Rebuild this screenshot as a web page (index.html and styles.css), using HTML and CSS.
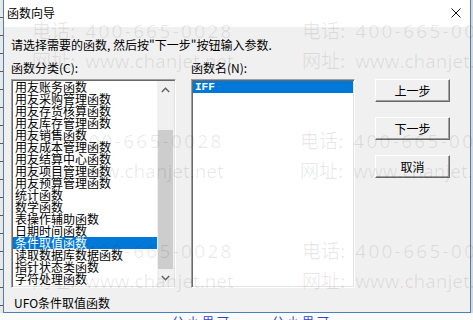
FILE: index.html
```html
<!DOCTYPE html>
<html lang="zh-CN">
<head>
    <meta charset="UTF-8">
    <title>函数向导</title>
    <link rel="stylesheet" href="styles.css">
</head>
<body>
    <div class="screen">
        <div class="desk">
            <div class="edge edge-left"></div>
            <div class="dialog">
                <div class="titlebar">
                    <span class="title">函数向导</span>
                    <span class="close-box">
                        <svg width="10" height="10" viewBox="0 0 10 10">
                            <path d="M0.5 0.5 L9.5 9.5 M9.5 0.5 L0.5 9.5" stroke="#111" stroke-width="1" fill="none"/>
                        </svg>
                    </span>
                </div>

                <div class="content">
                    <p class="hint">请选择需要的函数, 然后按"下一步"按钮输入参数.</p>

                    <div class="panes">
                        <div class="pane pane-cat">
                            <div class="pane-label">函数分类(C):</div>
                            <div class="listbox">
                                <div class="items">
                                    <div class="item">用友账务函数</div>
                                    <div class="item">用友采购管理函数</div>
                                    <div class="item">用友存货核算函数</div>
                                    <div class="item">用友库存管理函数</div>
                                    <div class="item">用友销售函数</div>
                                    <div class="item">用友成本管理函数</div>
                                    <div class="item">用友结算中心函数</div>
                                    <div class="item">用友项目管理函数</div>
                                    <div class="item">用友预算管理函数</div>
                                    <div class="item">统计函数</div>
                                    <div class="item">数学函数</div>
                                    <div class="item">表操作辅助函数</div>
                                    <div class="item">日期时间函数</div>
                                    <div class="item selected">条件取值函数</div>
                                    <div class="item">读取数据库数据函数</div>
                                    <div class="item">指针状态类函数</div>
                                    <div class="item">字符处理函数</div>
                                </div>
                                <div class="scrollbar">
                                    <div class="sb-arrow">
                                        <svg width="9" height="6" viewBox="0 0 9 6"><path d="M0.8 5 L4.5 1.3 L8.2 5" stroke="#606060" stroke-width="1.4" fill="none"/></svg>
                                    </div>
                                    <div class="sb-track"><div class="sb-thumb"></div></div>
                                    <div class="sb-arrow">
                                        <svg width="9" height="6" viewBox="0 0 9 6"><path d="M0.8 1 L4.5 4.7 L8.2 1" stroke="#606060" stroke-width="1.4" fill="none"/></svg>
                                    </div>
                                </div>
                            </div>
                        </div>

                        <div class="pane pane-fn">
                            <div class="pane-label">函数名(N):</div>
                            <div class="listbox">
                                <div class="items">
                                    <div class="item selected mono">IFF</div>
                                </div>
                            </div>
                        </div>

                        <div class="actions">
                            <button class="btn">上一步</button>
                            <button class="btn">下一步</button>
                            <button class="btn">取消</button>
                        </div>
                    </div>

                    <p class="status">UFO条件取值函数</p>
                </div>
            </div>
            <div class="edge edge-right"></div>
        </div>

        <div class="behind">
            <span class="behind-text t1">分小里可</span>
            <span class="behind-text t2">分小里可</span>
        </div>

        <!-- watermark of the screenshot source, lies over everything -->
        <div class="watermark">
            <div class="wm-tile" style="left: 32px; top: 15px;">
                <div class="wm-line"><span class="wm-key">电话:</span><span class="wm-val num">400-665-0028</span></div>
                <div class="wm-line"><span class="wm-key">网址:</span><span class="wm-val">www.chanjet.net</span></div>
            </div>
            <div class="wm-tile" style="left: 302px; top: 15px;">
                <div class="wm-line"><span class="wm-key">电话:</span><span class="wm-val num">400-665-0028</span></div>
                <div class="wm-line"><span class="wm-key">网址:</span><span class="wm-val">www.chanjet.net</span></div>
            </div>
            <div class="wm-tile" style="left: 22px; top: 125px;">
                <div class="wm-line"><span class="wm-key">电话:</span><span class="wm-val num">400-665-0028</span></div>
                <div class="wm-line"><span class="wm-key">网址:</span><span class="wm-val">www.chanjet.net</span></div>
            </div>
            <div class="wm-tile" style="left: 300px; top: 125px;">
                <div class="wm-line"><span class="wm-key">电话:</span><span class="wm-val num">400-665-0028</span></div>
                <div class="wm-line"><span class="wm-key">网址:</span><span class="wm-val">www.chanjet.net</span></div>
            </div>
            <div class="wm-tile" style="left: 32px; top: 235px;">
                <div class="wm-line"><span class="wm-key">电话:</span><span class="wm-val num">400-665-0028</span></div>
                <div class="wm-line"><span class="wm-key">网址:</span><span class="wm-val">www.chanjet.net</span></div>
            </div>
            <div class="wm-tile" style="left: 302px; top: 235px;">
                <div class="wm-line"><span class="wm-key">电话:</span><span class="wm-val num">400-665-0028</span></div>
                <div class="wm-line"><span class="wm-key">网址:</span><span class="wm-val">www.chanjet.net</span></div>
            </div>
        </div>
    </div>
</body>
</html>
```

FILE: styles.css
```css
:root {
    --face: #f0f0f0;
    --ui-font: "Noto Sans CJK SC", "Noto Sans", sans-serif;
    --select: #0078d7;
    --frame: #4b7fb8;
}

* {
    box-sizing: border-box;
}

body {
    margin: 0;
    width: 473px;
    height: 320px;
    overflow: hidden;
    font-family: var(--ui-font);
    font-size: 12px;
    color: #000;
    background-color: #e9e9e9;
}

.screen {
    position: relative;
    width: 473px;
    height: 320px;
    overflow: hidden;
}

.desk {
    display: flex;
    height: 313px;
}

/* bits of the main window behind the dialog */
.edge {
    background: repeating-linear-gradient(to bottom, #e8e8e8 0 17px, #5a5a5a 17px 18px);
}

.edge-left {
    width: 3px;
}

.edge-right {
    width: 2px;
    background: #d8d8d8;
}

.behind {
    position: relative;
    height: 7px;
    overflow: hidden;
    background-color: #fafbfd;
}

.behind-text {
    position: absolute;
    top: 3px;
    font-size: 12px;
    line-height: 12px;
    color: #3344c8;
    letter-spacing: 3px;
}

.behind-text.t1 {
    left: 172px;
}

.behind-text.t2 {
    left: 272px;
}

/* dialog */
.dialog {
    width: 468px;
    display: flex;
    flex-direction: column;
    background-color: var(--face);
    border: 1px solid var(--frame);
    border-top: none;
}

.titlebar {
    height: 27px;
    display: flex;
    align-items: center;
    justify-content: space-between;
    background-color: #fff;
    padding-left: 3px;
    padding-bottom: 1px;
}

.title {
    font-size: 12px;
    line-height: 14px;
}

.close-box {
    width: 28px;
    display: flex;
    justify-content: center;
}

.close-box svg {
    display: block;
}

.content {
    flex: 1;
    padding: 10px 0 1px 7px;
}

.hint {
    margin: 0;
    line-height: 16px;
}

.panes {
    display: flex;
    margin-top: 7px;
}

.pane-label {
    line-height: 16px;
    margin-bottom: 3px;
}

.pane-cat {
    width: 165px;
    margin-right: 15px;
}

.pane-fn {
    width: 164px;
    margin-right: 20px;
}

.listbox {
    display: flex;
    height: 209px;
    padding: 1px;
    background-color: #fff;
    border: 1px solid;
    border-color: #a0a0a0 #fff #fff #a0a0a0;
    box-shadow: inset 1px 1px #696969, inset -1px -1px #e3e3e3;
}

.items {
    flex: 1;
}

.item {
    height: 12px;
    line-height: 12px;
    padding-left: 2px;
    white-space: nowrap;
}

.item.selected {
    background-color: var(--select);
    color: #fff;
}

.item.mono {
    font-family: "Liberation Mono", monospace;
    font-weight: bold;
    font-size: 11px;
}

.scrollbar {
    width: 17px;
    display: flex;
    flex-direction: column;
    background-color: var(--face);
}

.sb-arrow {
    height: 17px;
    display: flex;
    align-items: center;
    justify-content: center;
}

.sb-arrow svg {
    display: block;
}

.sb-track {
    flex: 1;
    display: flex;
    flex-direction: column;
    padding: 32px 1px 0;
}

.sb-thumb {
    flex: 1;
    background-color: #cdcdcd;
}

.actions {
    display: flex;
    flex-direction: column;
    gap: 15px;
    padding-top: 19px;
}

.btn {
    width: 75px;
    height: 23px;
    padding: 0;
    font-family: var(--ui-font);
    font-size: 12px;
    color: #000;
    background-color: var(--face);
    border: 1px solid;
    border-color: #fff #696969 #696969 #fff;
    box-shadow: inset -1px -1px #a0a0a0;
}

.status {
    margin: 7px 0 0 3px;
    line-height: 16px;
}

/* watermark */
.watermark {
    position: absolute;
    inset: 0;
    pointer-events: none;
    color: rgba(0, 0, 0, 0.09);
}

.wm-tile {
    position: absolute;
    white-space: nowrap;
}

.wm-line {
    height: 30px;
    line-height: 30px;
    font-size: 19px;
}

.wm-key {
    font-family: "Noto Sans CJK SC", sans-serif;
    margin-right: 10px;
}

.wm-val {
    font-family: "Open Sans", sans-serif;
}

.wm-val.num {
    letter-spacing: 2.3px;
}
```
